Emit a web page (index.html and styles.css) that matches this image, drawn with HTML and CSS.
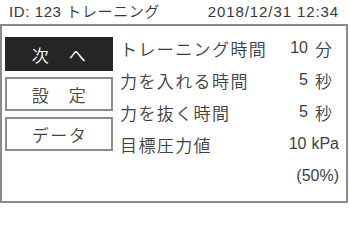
FILE: index.html
```html
<!DOCTYPE html>
<html lang="ja">
<head>
<meta charset="utf-8">
<title>トレーニング</title>
<link rel="stylesheet" href="styles.css">
</head>
<body>
<div class="screen">
  <header class="header">
    <span class="title">ID:&nbsp;123 トレーニング</span>
    <span class="datetime">2018/12/31 12:34</span>
  </header>
  <main class="main">
    <nav class="menu">
      <div class="btn btn-active">次　へ</div>
      <div class="btn">設　定</div>
      <div class="btn">データ</div>
    </nav>
    <section class="params">
      <div class="row"><span class="label">トレーニング時間</span><span class="value"><span class="num">10</span><span class="unit">分</span></span></div>
      <div class="row"><span class="label">力を入れる時間</span><span class="value"><span class="num">5</span><span class="unit">秒</span></span></div>
      <div class="row"><span class="label">力を抜く時間</span><span class="value"><span class="num">5</span><span class="unit">秒</span></span></div>
      <div class="row"><span class="label">目標圧力値</span><span class="value"><span class="num">10</span><span class="unit unit-latin">kPa</span></span></div>
      <div class="row row-sub"><span class="label"></span><span class="value"><span class="num">(50%)</span></span></div>
    </section>
  </main>
</div>
</body>
</html>
```

FILE: styles.css
```css
* { box-sizing: border-box; }
html, body { margin: 0; padding: 0; background: #fff; }
body {
  font-family: "Liberation Sans", "Noto Sans CJK JP", sans-serif;
  font-weight: 350;
  color: #404040;
}
.screen {
  width: 348px;
  height: 203px;
  display: flex;
  flex-direction: column;
}
.header {
  height: 26px;
  border-bottom: 2px solid #8a8a8a;
  display: flex;
  justify-content: space-between;
  align-items: center;
  padding: 0 9px 0 9px;
  font-size: 15px;
  line-height: 24px;
  color: #383838;
}
.title { letter-spacing: 0.6px; }
.datetime { letter-spacing: 0.9px; }
.main {
  flex: 1;
  display: flex;
  border: 2px solid #8a8a8a;
  border-top: none;
  padding-top: 11px;
}
.menu {
  margin-left: 3px;
  width: 108px;
  display: flex;
  flex-direction: column;
  gap: 6px;
}
.btn {
  height: 34px;
  border: 2px solid #8c8c8c;
  display: flex;
  align-items: center;
  justify-content: center;
  font-size: 17px;
  letter-spacing: 1.5px;
  padding-left: 1px;
  color: #444;
}
.btn-active {
  background: #252525;
  border-color: #252525;
  color: #fff;
}
.params {
  flex: 1;
  margin-left: 7px;
  margin-top: -5px;
  padding-right: 8px;
  display: grid;
  grid-template-columns: 1fr auto;
  grid-auto-rows: 32px;
  align-content: start;
  font-size: 17px;
  letter-spacing: 1.4px;
}
.row { display: contents; }
.label, .value {
  display: flex;
  align-items: center;
}
.value { justify-content: flex-end; gap: 7px; }
.num { font-size: 16px; letter-spacing: 0; }
.unit { letter-spacing: 0; margin-right: 6px; }
.unit-latin { font-size: 16px; margin-left: -2px; margin-right: -1px; }
.row-sub .value {
  height: 24px;
  margin-top: 4px;
  align-self: start;
}
.row-sub .num { font-size: 16px; margin-right: -1px; }
```
